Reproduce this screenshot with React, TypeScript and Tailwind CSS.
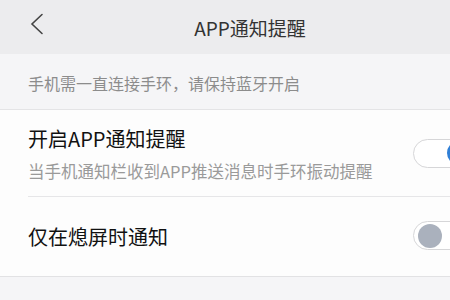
import { useState } from "react";

const font = { fontFamily: '"Noto Sans CJK SC", "Noto Sans", sans-serif' };

function Toggle({ on, onChange }: { on: boolean; onChange: () => void }) {
  return (
    <button
      onClick={onChange}
      className="relative h-[29px] w-[60px] shrink-0 rounded-full border border-[#d6d6d8] bg-white"
    >
      <span
        className={
          on
            ? "absolute top-[1.5px] left-[33px] h-[24px] w-[24px] rounded-full bg-[#2f7fd6]"
            : "absolute top-[1.5px] left-[4px] h-[24px] w-[24px] rounded-full bg-[#aab1bd]"
        }
      />
    </button>
  );
}

export default function App() {
  const [appNotify, setAppNotify] = useState(true);
  const [screenOff, setScreenOff] = useState(false);

  return (
    <div className="h-[300px] w-[450px] overflow-hidden bg-[#f5f5f7]" style={font}>
      {/* Header */}
      <div className="relative flex h-[54px] items-center justify-center bg-[#ececee] pl-[50px]">
        <svg
          className="absolute top-[13px] left-[29px]"
          width="16"
          height="22"
          viewBox="0 0 16 22"
          fill="none"
          stroke="#444"
          strokeWidth="1.6"
          strokeLinecap="round"
        >
          <path d="M13 1.5 L3 11 L13 20.5" />
        </svg>
        <span className="text-[19px] leading-none text-[#333]">APP通知提醒</span>
      </div>

      {/* Section hint */}
      <div className="flex h-[56px] items-center border-b border-[#e4e4e6] px-[28px] pt-[2px]">
        <span className="text-[16px] leading-none text-[#8c8c8c]">
          手机需一直连接手环，请保持蓝牙开启
        </span>
      </div>

      {/* Settings */}
      <div className="border-b border-[#e2e2e4] bg-[#fdfdfd]">
        <div className="ml-[28px] flex h-[87px] items-center border-b border-[#e6e6e8]">
          <div className="flex flex-1 flex-col gap-[14px] pt-[3px]">
            <span className="text-[20px] leading-none text-[#111]">开启APP通知提醒</span>
            <span className="text-[16.5px] leading-none text-[#9a9a9a]">
              当手机通知栏收到APP推送消息时手环振动提醒
            </span>
          </div>
          <div className="mr-[-23px] pt-[4px]">
            <Toggle on={appNotify} onChange={() => setAppNotify(!appNotify)} />
          </div>
        </div>
        <div className="ml-[28px] flex h-[79px] items-center">
          <span className="flex-1 text-[20px] leading-none text-[#111]">仅在熄屏时通知</span>
          <div className="mr-[-23px] pt-[2px]">
            <Toggle on={screenOff} onChange={() => setScreenOff(!screenOff)} />
          </div>
        </div>
      </div>
    </div>
  );
}
